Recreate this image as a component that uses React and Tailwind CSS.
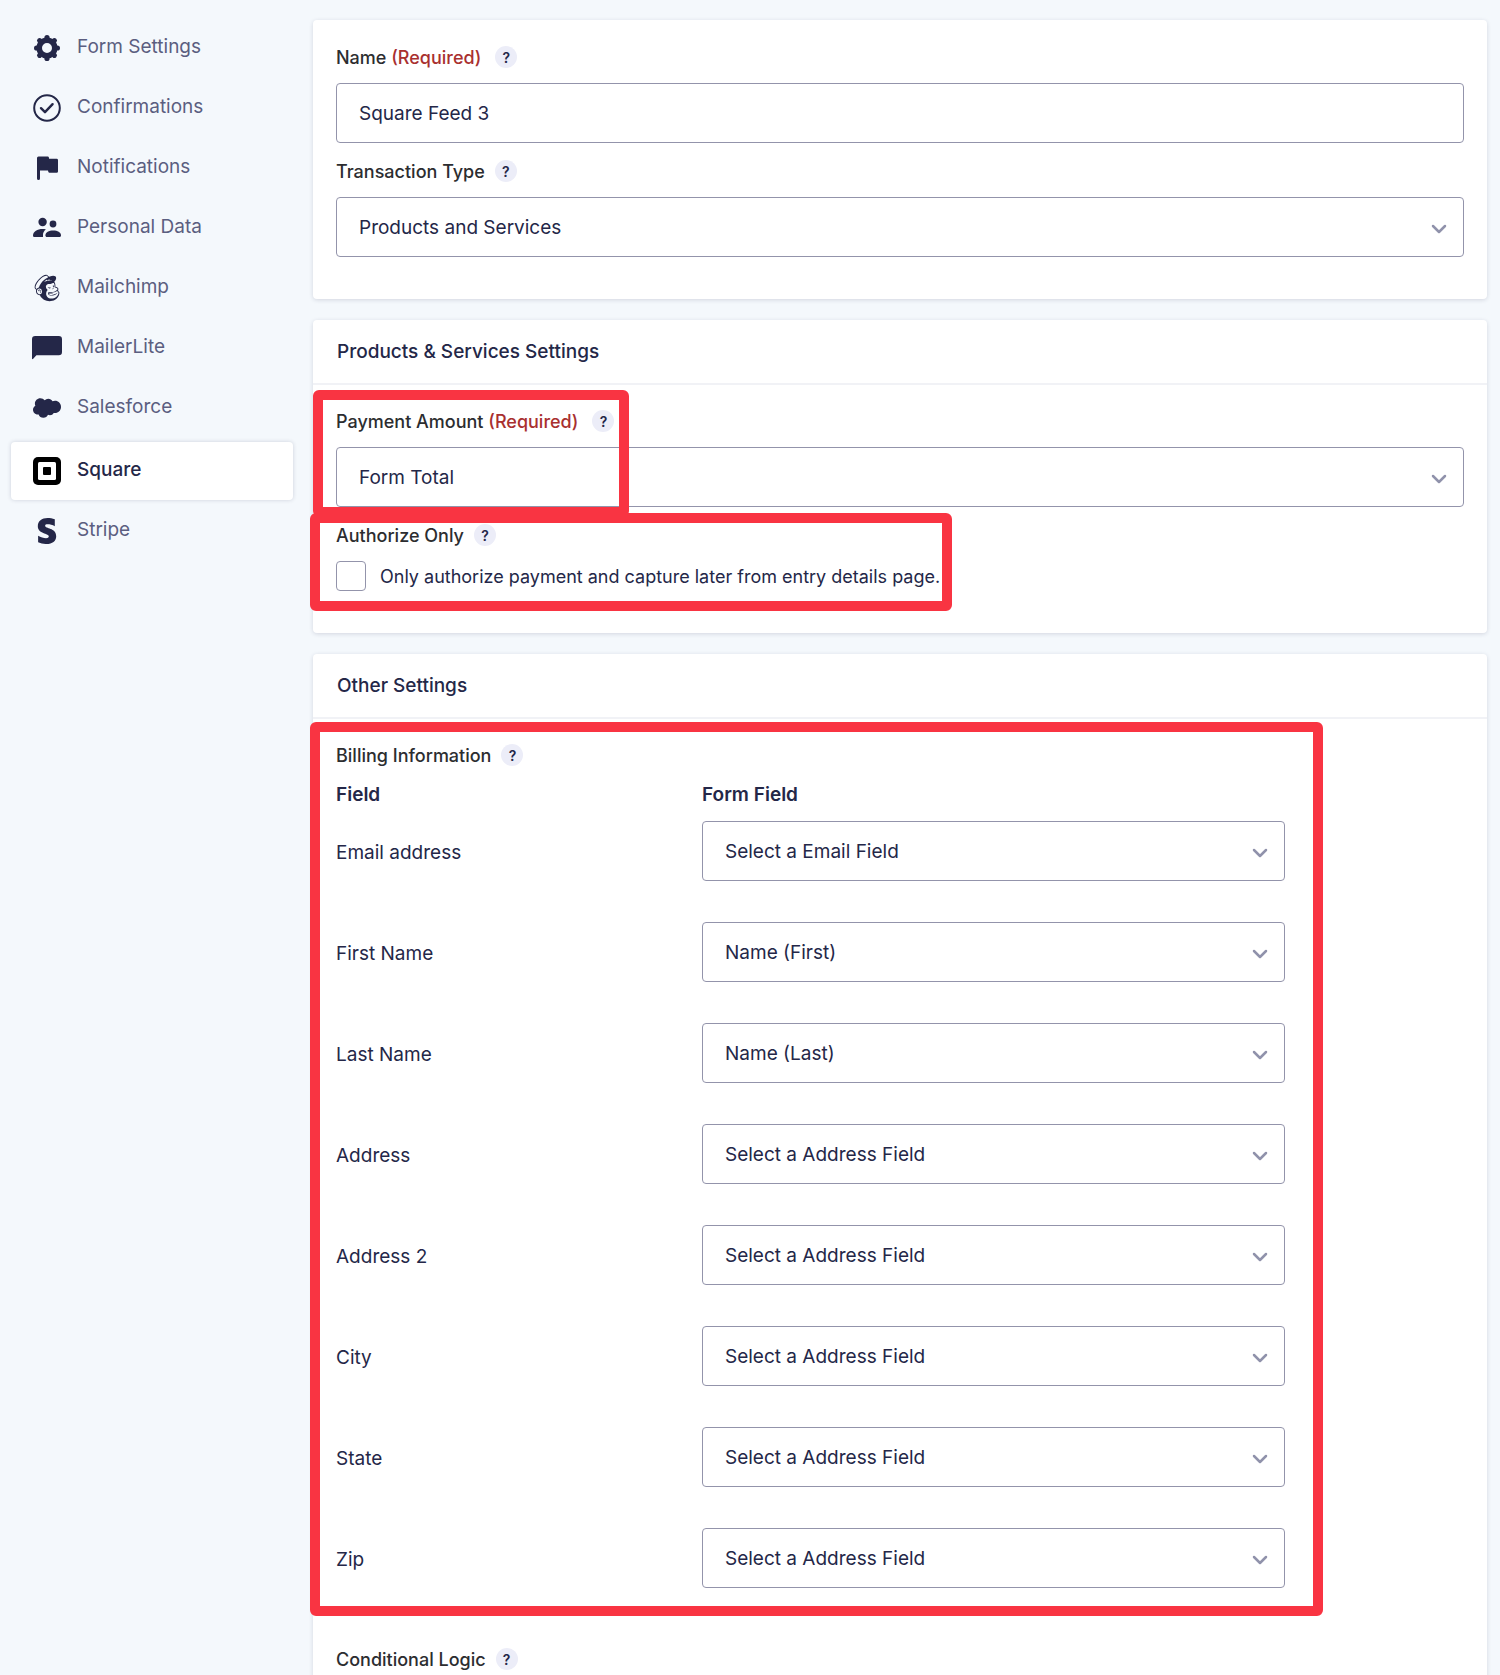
import { useState } from "react";
import { FaMailchimp, FaStripeS } from "react-icons/fa";

function GearIcon() {
  return (
    <svg viewBox="0 0 28 28" className="size-7" aria-hidden="true">
      <circle cx="14" cy="14" r="7.8" fill="none" stroke="currentColor" strokeWidth="5.6" />
      {[0, 45, 90, 135, 180, 225, 270, 315].map((a) => (
        <circle key={a} cx="14" cy="3.6" r="2.6" fill="currentColor" transform={`rotate(${a} 14 14)`} />
      ))}
    </svg>
  );
}

function CheckCircleIcon() {
  return (
    <svg viewBox="0 0 28 28" className="size-7" fill="none" stroke="currentColor" aria-hidden="true">
      <circle cx="14" cy="14" r="12.8" strokeWidth="2" />
      <path d="M8 14.2l4 4 7.6-8" strokeWidth="2.4" strokeLinecap="round" strokeLinejoin="round" />
    </svg>
  );
}

function FlagIcon() {
  return (
    <svg viewBox="0 0 28 28" className="size-7" fill="currentColor" aria-hidden="true">
      <path d="M4 4a1.5 1.5 0 0 1 1.5-1.5h9.2a1.2 1.2 0 0 1 1.2 1l.2 1.3h7.4A1.4 1.4 0 0 1 25 6.2v11.2a1.4 1.4 0 0 1-1.4 1.4h-7a1.3 1.3 0 0 1-1.3-1l-.3-1.4H7v8a1.5 1.5 0 0 1-3 0z" />
    </svg>
  );
}

function PeopleIcon() {
  return (
    <svg viewBox="0 0 28 28" className="size-7" fill="currentColor" aria-hidden="true">
      <circle cx="9.6" cy="8" r="4.2" />
      <circle cx="20" cy="10" r="3.4" />
      <path d="M0 21.5C0 17.5 4.5 15 9.5 15c1.3 0 2.4.1 3.4.4-1.9 1.4-2.9 3.2-2.9 5.3V23H1.2A1.2 1.2 0 0 1 0 21.8z" />
      <path d="M12.4 21.5c0-3.2 3.6-5 7.8-5s7.8 1.8 7.8 5c0 .9-.6 1.5-1.5 1.5H13.900c-.9 0-1.5-.6-1.5-1.5z" />
    </svg>
  );
}

function ChatIcon() {
  return (
    <svg viewBox="0 0 30 28" className="h-7 w-[30px] shrink-0" fill="currentColor" aria-hidden="true">
      <path d="M3.2 2h23.6A3.200 3.200 0 0 1 30 5.200v12.800a3.200 3.200 0 0 1-3.200 3.200H4.400L1.200 24.800C.7 25.400 0 25.200 0 24.500V5.200A3.200 3.200 0 0 1 3.200 2z" />
    </svg>
  );
}

function CloudIcon() {
  return (
    <svg viewBox="0 0 24 24" className="size-7" fill="currentColor" aria-hidden="true">
      <path d="M10.006 5.415a4.195 4.195 0 013.045-1.306c1.56 0 2.954.9 3.69 2.205.63-.3 1.35-.45 2.1-.45 2.85 0 5.159 2.34 5.159 5.22s-2.31 5.22-5.176 5.22c-.345 0-.69-.044-1.02-.104a3.75 3.75 0 01-3.3 1.95c-.6 0-1.155-.15-1.65-.375A4.314 4.314 0 018.88 20.4a4.302 4.302 0 01-4.05-2.82c-.27.062-.54.076-.825.076-2.204 0-4.005-1.8-4.005-4.05 0-1.5.811-2.805 2.01-3.51-.255-.57-.39-1.2-.39-1.846 0-2.58 2.1-4.65 4.65-4.65 1.53 0 2.85.705 3.72 1.8z" />
    </svg>
  );
}

function SquareIcon() {
  return (
    <svg viewBox="0 0 28 28" className="size-7" aria-hidden="true">
      <rect width="28" height="28" rx="5" fill="#000" />
      <rect x="5" y="5" width="18" height="18" rx="1.5" fill="#fff" />
      <rect x="10" y="10" width="8" height="8" rx="1" fill="#000" />
    </svg>
  );
}

const navItems = [
  { label: "Form Settings", icon: <GearIcon /> },
  { label: "Confirmations", icon: <CheckCircleIcon /> },
  { label: "Notifications", icon: <FlagIcon /> },
  { label: "Personal Data", icon: <PeopleIcon /> },
  { label: "Mailchimp", icon: <FaMailchimp className="size-[30px] shrink-0" /> },
  { label: "MailerLite", icon: <ChatIcon /> },
  { label: "Salesforce", icon: <CloudIcon /> },
  { label: "Square", icon: <SquareIcon />, active: true },
  { label: "Stripe", icon: <FaStripeS className="size-[26px]" /> },
];

const billingFields = [
  { id: "email", label: "Email address", value: "Select a Email Field" },
  { id: "first-name", label: "First Name", value: "Name (First)" },
  { id: "last-name", label: "Last Name", value: "Name (Last)" },
  { id: "address", label: "Address", value: "Select a Address Field" },
  { id: "address-2", label: "Address 2", value: "Select a Address Field" },
  { id: "city", label: "City", value: "Select a Address Field" },
  { id: "state", label: "State", value: "Select a Address Field" },
  { id: "zip", label: "Zip", value: "Select a Address Field" },
];

function Sidebar() {
  return (
    <nav className="w-[282px] shrink-0 pt-[18px]">
      <ul>
        {navItems.map((item) => (
          <li key={item.label} className={item.active ? "mt-1 mb-px" : ""}>
            <a
              href="#"
              aria-current={item.active ? "page" : undefined}
              className={
                item.active
                  ? "flex h-[58px] items-center gap-4 rounded bg-white pl-[22px] font-medium text-[#242748] shadow-[0_0_4px_rgba(36,39,72,0.18)]"
                  : "flex h-[60px] items-center gap-4 pl-[22px] text-[#5b5e80]"
              }
            >
              <span className="flex w-7 justify-center text-[#242748]">{item.icon}</span>
              <span className="pb-px text-[19px]">{item.label}</span>
            </a>
          </li>
        ))}
      </ul>
    </nav>
  );
}

function Card({ title, children }) {
  return (
    <section className="rounded bg-white shadow-[0_1px_4px_rgba(36,39,72,0.16)]">
      {title && (
        <h2 className="flex h-[65px] items-center border-b-2 border-[#f1f2f6] px-6 pt-[2px] text-[19px] font-medium text-[#242748]">
          {title}
        </h2>
      )}
      <div className={title ? "px-[23px] pt-[25px]" : "px-[23px] pt-[26px]"}>{children}</div>
    </section>
  );
}

function FieldLabel({ htmlFor, children, required }) {
  const Tag = htmlFor ? "label" : "span";
  return (
    <div
      className={
        required
          ? "flex h-[22px] items-center gap-[14px] text-[18px] font-medium text-[#2c2d30]"
          : "flex h-[22px] items-center gap-[10px] text-[18px] font-medium text-[#2c2d30]"
      }
    >
      <Tag htmlFor={htmlFor}>
        {children}
        {required && <span className="text-[#a9302f]"> (Required)</span>}
      </Tag>
      <button
        type="button"
        aria-label="Help"
        className="flex size-[22px] items-center justify-center rounded-full bg-[#ecedf8] text-[14px] font-semibold text-[#242748]"
      >
        ?
      </button>
    </div>
  );
}

function SelectBox({ id, value }) {
  return (
    <div className="relative">
      <select
        id={id}
        defaultValue={value}
        className="block h-[60px] w-full appearance-none rounded border border-[#9394ab] bg-white px-[22px] pt-[2px] text-[19px] text-[#242748]"
      >
        <option>{value}</option>
      </select>
      <svg
        viewBox="0 0 16 10"
        className="pointer-events-none absolute top-[27px] right-[17px] h-[10px] w-4"
        fill="none"
        stroke="#9092ab"
        strokeWidth="2.5"
        strokeLinecap="round"
        strokeLinejoin="round"
        aria-hidden="true"
      >
        <path d="M2 2l6 6 6-6" />
      </svg>
    </div>
  );
}

export default function App() {
  const [name, setName] = useState("Square Feed 3");
  const [authorizeOnly, setAuthorizeOnly] = useState(false);

  return (
    <div className="flex h-screen gap-5 overflow-hidden bg-[#f4f8fc] pr-[13px] pl-[11px] font-[Inter,sans-serif] text-[#242748]">
      <Sidebar />

      <main className="flex min-w-0 flex-1 flex-col gap-[21px] pt-5">
        <Card>
          <FieldLabel htmlFor="feed-name" required>Name</FieldLabel>
          <input
            id="feed-name"
            type="text"
            value={name}
            onChange={(e) => setName(e.target.value)}
            className="mt-[15px] mb-[17px] block h-[60px] w-full rounded border border-[#9394ab] bg-white px-[22px] text-[19px]"
          />
          <FieldLabel htmlFor="transaction-type">Transaction Type</FieldLabel>
          <div className="mt-[15px] pb-[42px]">
            <SelectBox id="transaction-type" value="Products and Services" />
          </div>
        </Card>

        <Card title="Products & Services Settings">
          <div className="relative">
            <FieldLabel htmlFor="payment-amount" required>Payment Amount</FieldLabel>
            <div className="mt-[15px]">
              <SelectBox id="payment-amount" value="Form Total" />
            </div>
            <div className="pointer-events-none absolute -top-5 -left-[23px] h-[127px] w-[316px] rounded-md border-[10px] border-[#f93442]" />
          </div>

          <div className="relative mt-[17px] pb-[42px]">
            <FieldLabel>Authorize Only</FieldLabel>
            <label className="mt-[15px] flex h-[30px] items-center gap-[14px] text-[18px]">
              <input
                type="checkbox"
                checked={authorizeOnly}
                onChange={(e) => setAuthorizeOnly(e.target.checked)}
                className="size-[30px] appearance-none rounded border border-[#9394ab] bg-white checked:bg-[#242748]"
              />
              Only authorize payment and capture later from entry details page.
            </label>
            <div className="pointer-events-none absolute -top-[11px] -left-[26px] h-[98px] w-[642px] rounded-md border-[10px] border-[#f93442]" />
          </div>
        </Card>

        <Card title="Other Settings">
          <div className="relative">
            <FieldLabel>Billing Information</FieldLabel>
            <table className="mt-[15px] w-[949px] max-w-full text-left text-[19px]">
              <thead>
                <tr className="h-10 align-top">
                  <th className="w-[366px] font-semibold">Field</th>
                  <th className="font-semibold">Form Field</th>
                </tr>
              </thead>
              <tbody>
                {billingFields.map((f) => (
                  <tr key={f.id} className="align-top">
                    <td className="pt-[18px]">
                      <label htmlFor={f.id}>{f.label}</label>
                    </td>
                    <td className="pb-[41px]">
                      <SelectBox id={f.id} value={f.value} />
                    </td>
                  </tr>
                ))}
              </tbody>
            </table>
            <div className="pointer-events-none absolute -top-[22px] -left-[26px] h-[894px] w-[1013px] rounded-md border-[10px] border-[#f93442]" />
          </div>
          <div className="mt-[19px] pb-10">
            <FieldLabel>Conditional Logic</FieldLabel>
          </div>
        </Card>
      </main>
    </div>
  );
}
